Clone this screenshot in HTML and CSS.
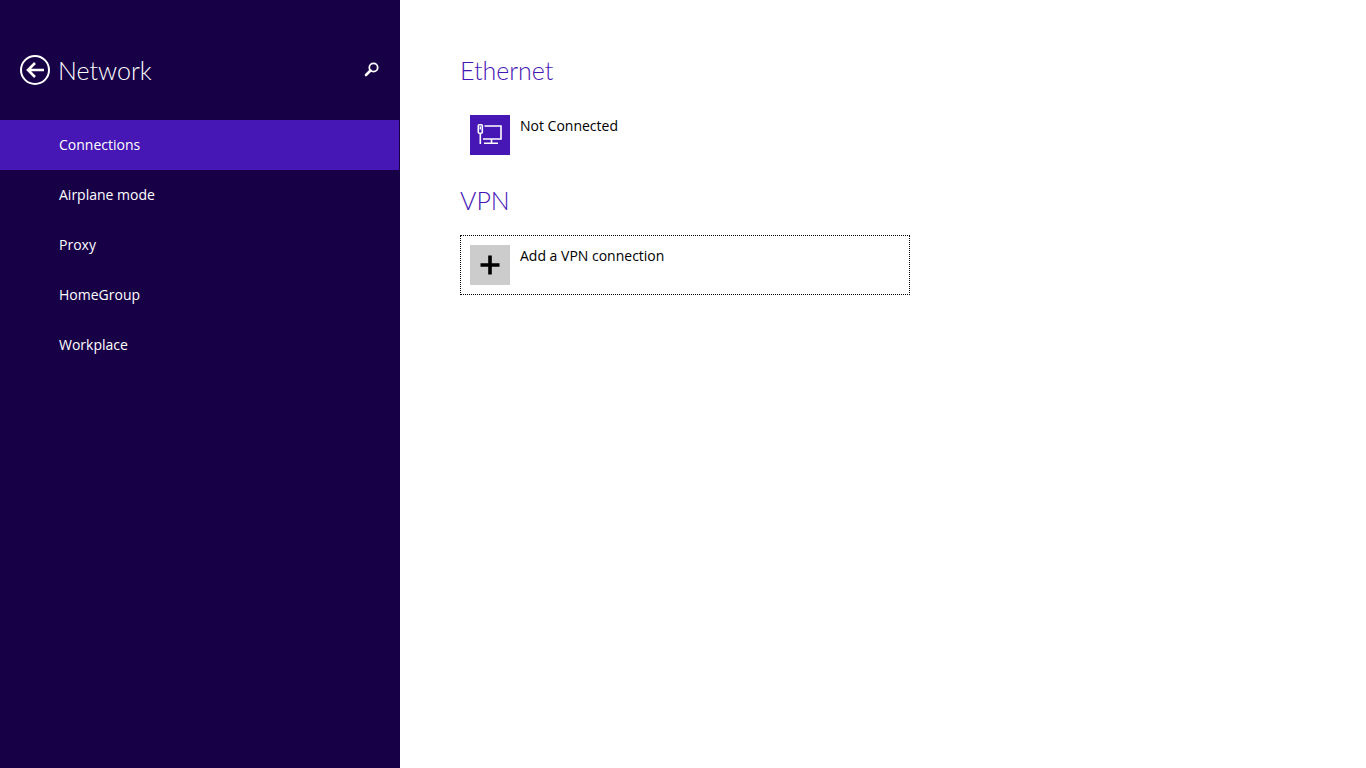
FILE: index.html
```html
<!DOCTYPE html>
<html lang="en">
<head>
    <meta charset="UTF-8">
    <title>Network</title>
    <link rel="stylesheet" href="styles.css">
</head>
<body>
    <div class="sidebar">
        <div class="side-header">
            <svg class="back-icon" width="32" height="32" viewBox="0 0 32 32">
                <circle cx="16" cy="16" r="14" fill="none" stroke="#fff" stroke-width="2"/>
                <path d="M16 9 L9 16 L16 23 M9.5 16 H25" fill="none" stroke="#fff" stroke-width="2.6"/>
            </svg>
            <div class="side-title">Network</div>
            <svg class="search-icon" width="16" height="16" viewBox="0 0 16 16">
                <circle cx="9.5" cy="6.5" r="4.2" fill="none" stroke="#fff" stroke-width="1.8"/>
                <path d="M6.5 9.5 L2 14" fill="none" stroke="#fff" stroke-width="2.6" stroke-linecap="round"/>
            </svg>
        </div>
        <div class="nav-item active">Connections</div>
        <div class="nav-item">Airplane mode</div>
        <div class="nav-item">Proxy</div>
        <div class="nav-item">HomeGroup</div>
        <div class="nav-item">Workplace</div>
    </div>

    <div class="content">
        <h2 class="section-title">Ethernet</h2>
        <div class="tile-row">
            <div class="tile-icon purple">
                <svg width="40" height="40" viewBox="0 0 40 40">
                    <g fill="none" stroke="#fff" stroke-width="1.6">
                        <rect x="8.3" y="9.8" width="4" height="8.4" rx="1"/>
                        <path d="M10.3 18 V29"/>
                        <path d="M14.5 11 H31 V24 H13"/>
                        <path d="M21.5 24 V28 M14 28.2 H28"/>
                    </g>
                    <rect x="9.6" y="11.5" width="1.4" height="3" fill="#fff"/>
                </svg>
            </div>
            <div class="tile-label">Not Connected</div>
        </div>
        <h2 class="section-title vpn">VPN</h2>
        <div class="tile-row focused">
            <div class="tile-icon grey">
                <svg width="40" height="40" viewBox="0 0 40 40">
                    <path d="M20 10.5 V29.5 M10.5 20 H29.5" fill="none" stroke="#000" stroke-width="3.6"/>
                </svg>
            </div>
            <div class="tile-label">Add a VPN connection</div>
        </div>
    </div>
</body>
</html>
```

FILE: styles.css
```css
body {
    margin: 0;
    height: 768px;
    display: flex;
    overflow: hidden;
    background-color: #fff;
    font-family: "Open Sans", "Noto Sans", sans-serif;
}

.sidebar {
    width: 400px;
    height: 768px;
    background-color: #180047;
    color: #fff;
}

.side-header {
    height: 120px;
    box-sizing: border-box;
    padding: 54px 20px 0 19px;
    display: flex;
    align-items: flex-start;
}

.side-title {
    font-family: Lato, "Open Sans", sans-serif;
    font-size: 25px;
    font-weight: 300;
    line-height: 32px;
    margin-left: 7px;
    flex: 1;
}

.search-icon {
    margin-top: 7px;
}

.nav-item {
    height: 50px;
    line-height: 50px;
    padding-left: 59px;
    font-size: 14px;
}

.active {
    width: 399px;
    padding-left: 59px;
    box-sizing: border-box;
    background-color: #4617b4;
}

.content {
    padding: 52px 0 0 60px;
}

.section-title {
    margin: 0;
    font-family: Lato, "Open Sans", sans-serif;
    font-size: 25px;
    font-weight: 300;
    line-height: 36px;
    color: #4617b4;
}

.vpn {
    margin-top: 17px;
}

.tile-row {
    width: 450px;
    height: 60px;
    box-sizing: border-box;
    padding: 9px;
    margin-top: 17px;
    border: 1px solid transparent;
    display: flex;
}

.focused {
    border: 1px dotted #000;
}

.tile-icon {
    width: 40px;
    height: 40px;
}

.purple {
    background-color: #4617b4;
}

.grey {
    background-color: #ccc;
}

.tile-label {
    margin-left: 10px;
    padding-top: 1px;
    font-size: 14px;
    line-height: 20px;
    color: #000;
}
```
